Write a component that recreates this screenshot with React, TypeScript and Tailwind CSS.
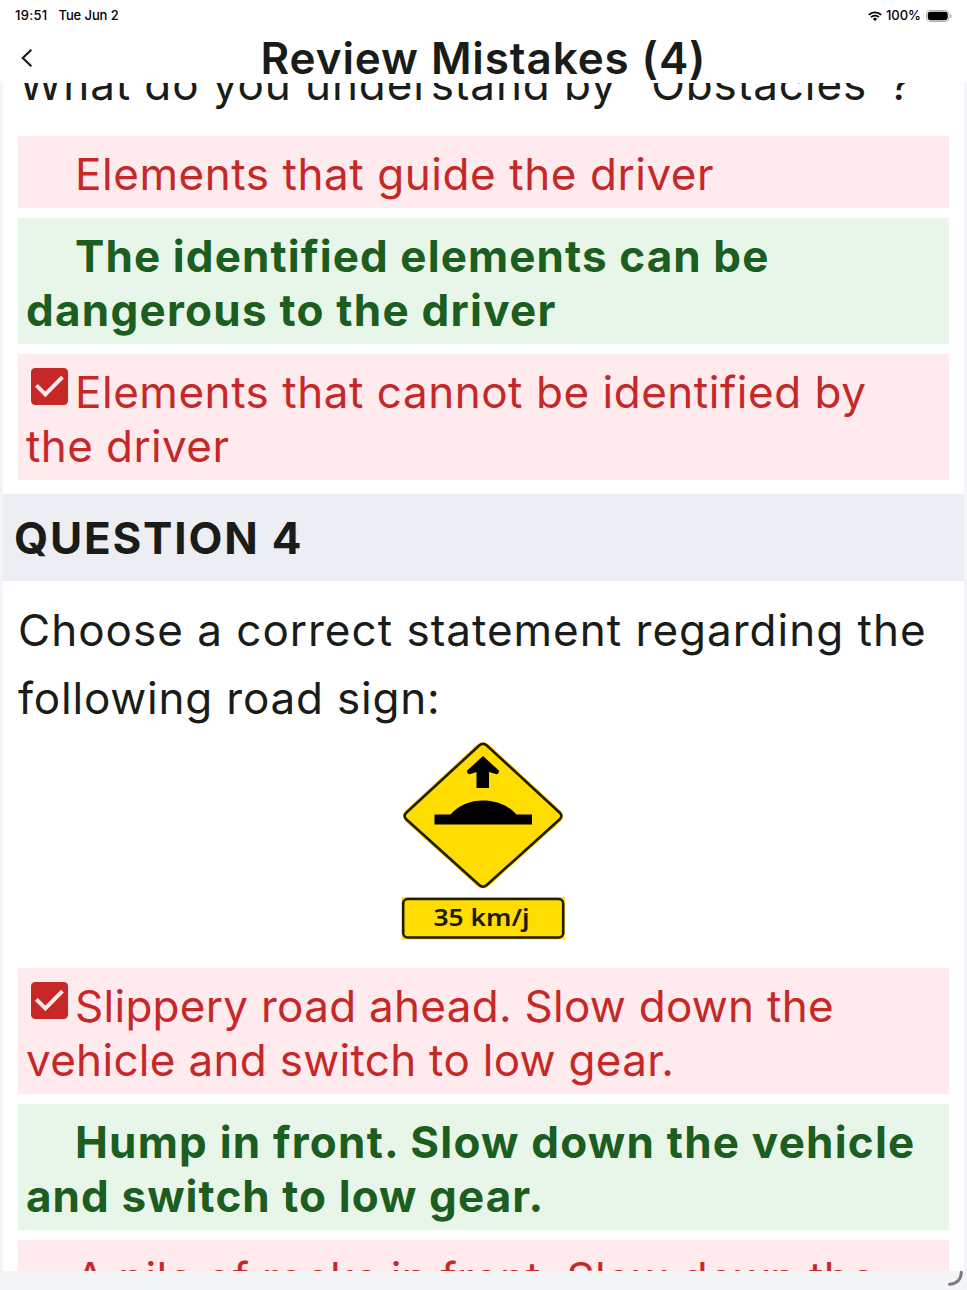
import React from 'react';

interface Line {
  text: string;
  tracking: string;
}

interface Option {
  lines: Line[];
  correct?: boolean;
  checked?: boolean;
}

const questionThree: Option[] = [
  { lines: [{ text: 'Elements that guide the driver', tracking: 'tracking-[0.56px]' }] },
  {
    correct: true,
    lines: [
      { text: 'The identified elements can be', tracking: 'tracking-[1.1px]' },
      { text: 'dangerous to the driver', tracking: 'tracking-[1.25px]' },
    ],
  },
  {
    checked: true,
    lines: [
      { text: 'Elements that cannot be identified by', tracking: 'tracking-[0.53px]' },
      { text: 'the driver', tracking: 'tracking-[0.4px]' },
    ],
  },
];

const questionFour: Option[] = [
  {
    checked: true,
    lines: [
      { text: 'Slippery road ahead. Slow down the', tracking: 'tracking-[0.28px]' },
      { text: 'vehicle and switch to low gear.', tracking: 'tracking-[0.3px]' },
    ],
  },
  {
    correct: true,
    lines: [
      { text: 'Hump in front. Slow down the vehicle', tracking: 'tracking-[1.22px]' },
      { text: 'and switch to low gear.', tracking: 'tracking-[1.08px]' },
    ],
  },
  {
    lines: [
      { text: 'A pile of rocks in front. Slow down the', tracking: 'tracking-[0.28px]' },
      { text: 'vehicle and stop.', tracking: 'tracking-[0.3px]' },
    ],
  },
];

const StatusBar: React.FC = () => (
  <div className="flex h-[31px] items-center justify-between pl-[15px] pr-[15px] text-[13px] font-medium text-black">
    <div className="flex gap-[11px]">
      <span className="tracking-[0.3px]">19:51</span>
      <span className="tracking-[-0.1px]">Tue Jun 2</span>
    </div>
    <div className="flex items-center">
      <svg className="mr-1 h-[10px] w-[14px]" viewBox="0 0 14 10">
        <g fill="none" stroke="black" strokeWidth="1.9">
          <path d="M0.8 3.9a8.8 8.8 0 0 1 12.4 0" />
          <path d="M3.1 6.2a5.5 5.5 0 0 1 7.8 0" />
        </g>
        <path d="M7 10L4.9 7.9a3 3 0 0 1 4.2 0z" />
      </svg>
      <span className="tracking-[0px]">100%</span>
      <svg className="ml-[5px] h-3 w-[26px]" viewBox="0 0 26 12">
        <rect x="0.5" y="0.5" width="22.5" height="11" rx="3.6" fill="white" stroke="#b0b0b0" />
        <rect x="1.8" y="1.8" width="19.900" height="8.400" rx="2.4" />
        <path d="M24.2 4v4c0.9-0.3 1.4-1.1 1.4-2s-0.5-1.7-1.4-2z" fill="#a6a6a6" />
      </svg>
    </div>
  </div>
);

const CheckedBox: React.FC = () => (
  <svg className="h-[37px] w-[37px]" viewBox="0 0 37 37">
    <rect width="37" height="37" rx="4.2" fill="#c62828" />
    <path d="M5.4 17.4l9 9L31.4 9.2" fill="none" stroke="#ffebee" strokeWidth="4" />
  </svg>
);

const AnswerOption: React.FC<{ option: Option }> = ({ option }) => (
  <div
    className={`pt-[11px] pb-[7px] pl-2 text-[44px] leading-[54px] whitespace-nowrap ${
      option.correct ? 'bg-[#e8f5e9] font-bold text-[#1b5e20]' : 'bg-[#ffebee] text-[#c62828]'
    }`}
  >
    {option.lines.map((line, idx) => (
      <div key={idx} className="flex">
        {idx === 0 && (
          <span className="h-[54px] w-[49px] shrink-0 pt-[3px] pl-[5px]">{option.checked && <CheckedBox />}</span>
        )}
        <span className={line.tracking}>{line.text}</span>
      </div>
    ))}
  </div>
);

const SpeedHumpSign: React.FC = () => (
  <svg className="block h-[200px] w-[164px]" viewBox="0 0 164 200">
    {/* Diamond */}
    <path
      d="M76 4.5Q82 0 88 4.5L159.500 70.500Q164.500 76 159.500 81.500L88 146Q82 151 76 146L4.500 81.500Q-0.500 76 4.500 70.500Z"
      fill="#ffdd00"
    />
    <path
      d="M78.200 5.500Q82 2.300 85.800 5.500L158.500 72.500Q162.300 76 158.500 79.500L85.800 145Q82 148.400 78.200 145L5.500 79.500Q1.700 76 5.500 72.500Z"
      fill="none"
      stroke="#211c00"
      strokeWidth="2.6"
    />
    <path d="M82 16L66.200 30.500Q65.400 34 68.500 34.300L75.500 32V48H88V32L95.500 34.300Q98.500 34 97.800 30.500Z" />
    <path d="M33.500 74.500H49.500C58 65 69 60.500 82 60.500S107 65 115.500 74.500H131V84.500H33.500Z" />
    {/* Speed plate */}
    <rect x="0.700" y="157" width="163" height="42.500" fill="#ffdd00" />
    <rect x="2.200" y="159" width="160" height="38.500" rx="4.500" fill="none" stroke="#211c00" strokeWidth="2.600" />
    <text
      x="32.500"
      y="185.500"
      className="font-['Noto_Sans','Liberation_Sans',sans-serif] text-[23px] font-semibold"
      textLength="96"
      lengthAdjust="spacingAndGlyphs"
      fill="#1d1900"
    >
      35 km/j
    </text>
  </svg>
);

const App: React.FC = () => (
  <div className="flex h-[1290px] w-[967px] flex-col overflow-hidden bg-white font-['Inter','Liberation_Sans',sans-serif] text-[#191c18]">
    <StatusBar />

    {/* Title bar */}
    <header className="grid h-[52px] shrink-0 grid-cols-[60px_1fr_60px] items-center">
      <button className="pl-[21px]">
        <svg className="h-[18px] w-3" viewBox="0 0 12 18" fill="none" stroke="currentColor" strokeWidth="2.2">
          <path d="M10.300 0.800L1.800 9L10.300 17.200" />
        </svg>
      </button>
      <h1 className="pt-[1px] text-center text-[44px] leading-[52px] font-semibold whitespace-nowrap tracking-[0.9px]">
        Review Mistakes (4)
      </h1>
    </header>

    {/* Scrolled list */}
    <main className="h-[1188px] shrink-0 overflow-hidden border-r-3 border-l-3 border-[#f4f5f8]">
      <div className="-mt-[33px]">
        <p className="mb-[18px] pl-4 text-[44px] leading-[68px] whitespace-pre tracking-[0.9px]">
          {'What do you understand by "Obstacles"?'}
        </p>
        <div className="flex flex-col gap-[10px] pr-[15px] pl-[15px]">
          {questionThree.map((option, idx) => (
            <AnswerOption key={idx} option={option} />
          ))}
        </div>

        <h2 className="mt-[14px] h-[87px] bg-[#edeef3] pl-[11px] text-[44px] leading-[89px] font-bold tracking-[1.8px]">
          QUESTION 4
        </h2>

        <div className="pt-[15px] pb-2 pl-[15px] text-[44px] leading-[68px] whitespace-nowrap">
          <p className="tracking-[1px]">Choose a correct statement regarding the</p>
          <p className="tracking-[0.8px]">following road sign:</p>
        </div>
        <div className="flex justify-center pr-[1px]">
          <SpeedHumpSign />
        </div>
        <div className="mt-7 flex flex-col gap-[10px] pr-[15px] pl-[15px]">
          {questionFour.map((option, idx) => (
            <AnswerOption key={idx} option={option} />
          ))}
        </div>
      </div>
    </main>

    <footer className="flex h-[19px] shrink-0 justify-end bg-[#f3f5f7]">
      <svg className="h-[19px] w-5" viewBox="0 0 20 19" fill="none" stroke="#7c7c7e" strokeWidth="3" strokeLinecap="round">
        <path d="M2.500 13.200C9.500 13 14.300 8.500 14.300 1.300" />
      </svg>
    </footer>
  </div>
);

export default App;
